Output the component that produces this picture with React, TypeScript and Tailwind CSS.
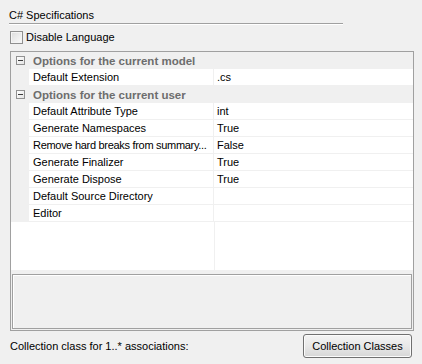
import React from 'react'

type Row =
  | { kind: 'category'; label: string }
  | { kind: 'prop'; name: string; value: string; tight?: boolean }

const rows: Row[] = [
  { kind: 'category', label: 'Options for the current model' },
  { kind: 'prop', name: 'Default Extension', value: '.cs' },
  { kind: 'category', label: 'Options for the current user' },
  { kind: 'prop', name: 'Default Attribute Type', value: 'int' },
  { kind: 'prop', name: 'Generate Namespaces', value: 'True' },
  { kind: 'prop', name: 'Remove hard breaks from summary...', value: 'False', tight: true },
  { kind: 'prop', name: 'Generate Finalizer', value: 'True' },
  { kind: 'prop', name: 'Generate Dispose', value: 'True' },
  { kind: 'prop', name: 'Default Source Directory', value: '' },
  { kind: 'prop', name: 'Editor', value: '' },
]

function MinusBox() {
  return (
    <div className="flex h-[9px] w-[9px] items-center justify-center border border-[#919191] bg-gradient-to-br from-[#ffffff] to-[#e4e4e4]">
      <div className="h-px w-[5px] bg-[#3c3c3c]" />
    </div>
  )
}

function CategoryRow({ label }: { label: string }) {
  return (
    <div className="flex h-[17px] items-center bg-[#f0f0f0] pl-[5px]">
      <MinusBox />
      <span className="pl-[8px] text-[11.5px] font-bold leading-[16px] text-[#6d6d6d]">{label}</span>
    </div>
  )
}

function PropRow({ name, value, tight }: { name: string; value: string; tight?: boolean }) {
  return (
    <div className="flex h-[17px]">
      <div className="w-[18px] shrink-0 bg-[#f0f0f0]" />
      <div className="flex flex-1 border-b border-[#f0f0f0]">
        <div
          className={
            tight
              ? 'w-[185px] shrink-0 whitespace-nowrap border-r border-[#f0f0f0] pl-[4px] leading-[16px] tracking-[-0.3px]'
              : 'w-[185px] shrink-0 whitespace-nowrap border-r border-[#f0f0f0] pl-[4px] leading-[16px]'
          }
        >
          {name}
        </div>
        <div className="flex-1 pl-[3px] leading-[16px]">{value}</div>
      </div>
    </div>
  )
}

export default function App() {
  return (
    <div className="flex h-[364px] w-[422px] flex-col bg-[#f0f0f0] font-['Liberation_Sans',Arial,sans-serif] text-[11px] text-black">
      <div className="pl-[9px] pt-[9px] leading-[13px]">C# Specifications</div>
      <div className="ml-[9px] mt-[1px] w-[334px] border-b border-t border-b-white border-t-[#a0a0a0]" />

      <div className="mt-[6px] flex h-[13px] items-center pl-[10px]">
        <div className="h-[13px] w-[13px] border border-[#8f8f8f] bg-gradient-to-br from-[#dcdcdc] to-[#fbfbfb] shadow-[inset_0_0_0_1px_#f4f4f4]" />
        <span className="pl-[3px] leading-[13px]">Disable Language</span>
      </div>

      <div className="ml-[10px] mt-[7px] flex h-[280px] w-[404px] flex-col border border-[#a0a0a0] bg-[#f0f0f0]">
        <div className="flex h-[218px] flex-col bg-white">
          {rows.map((r, i) =>
            r.kind === 'category' ? (
              <CategoryRow key={i} label={r.label} />
            ) : (
              <PropRow key={i} name={r.name} value={r.value} tight={r.tight} />
            )
          )}
          <div className="flex flex-1">
            <div className="w-[204px] border-r border-[#f0f0f0]" />
          </div>
        </div>
        <div className="mx-[1px] mt-[4px] h-[55px] border border-[#a0a0a0] bg-[#f0f0f0] shadow-[inset_1px_1px_0_#ffffff]" />
      </div>

      <div className="mt-[3px] flex h-[24px] items-center justify-between pl-[10px] pr-[10px]">
        <span className="leading-[13px]">Collection class for 1..* associations:</span>
        <button className="h-[24px] w-[109px] rounded-[3px] border border-[#707070] bg-gradient-to-b from-[#f3f3f3] via-[#e8e8e8] to-[#d6d6d6] leading-[13px] text-black shadow-[inset_0_0_0_1px_#fbfbfb]">
          Collection Classes
        </button>
      </div>
    </div>
  )
}
